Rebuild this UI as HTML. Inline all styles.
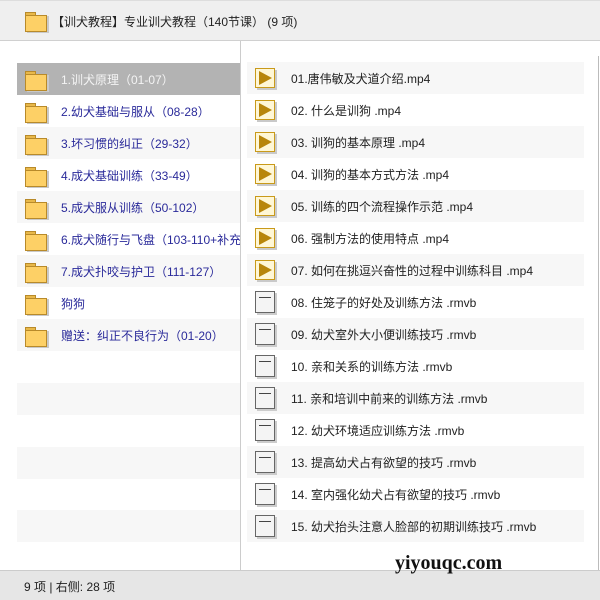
<!DOCTYPE html><html><head><meta charset="utf-8"><style>
*{margin:0;padding:0;box-sizing:border-box}
body{width:600px;height:600px;overflow:hidden;background:#fff;font-family:"Liberation Sans","Noto Sans CJK SC",sans-serif;font-size:12px;color:#222;position:relative}
.hdr{position:absolute;left:0;top:0;width:600px;height:41px;background:#efefef;border-bottom:1px solid #d0d0d0;border-top:1px solid #ddd}
.hdr span{position:absolute;left:52px;top:12px;font-size:12px;color:#222}
.fold{position:absolute;width:20px;height:18px}
.fold:before{content:"";position:absolute;left:0;top:0;width:9px;height:4px;background:#e8b84a;border:1px solid #b88a2a;border-bottom:none}
.fold:after{content:"";position:absolute;left:0;top:3px;width:20px;height:15px;background:#fdd066;border:1px solid #b88a2a;box-shadow:2px 1px 0 #c9c9c9}
.div{position:absolute;left:240px;top:41px;width:1px;height:529px;background:#ccc}
.row{position:absolute;height:32px}
.l{left:17px;width:223px}
.r{left:247px;width:337px}
.g{background:#f7f7f7}
.sel{background:#b3b3b3}
.t{position:absolute;top:8px;white-space:nowrap;font-size:12px}
.l .t{left:44px;color:#2a2a9a}
.sel .t{color:#f4f4f4}
.l .fold{left:8px;top:8px}
.r .t{left:44px;color:#222}
.vid{position:absolute;left:8px;top:6px;width:20px;height:20px;background:#fff7d6;border:1px solid #c99a1a;box-shadow:2px 2px 0 #c9c9c9}
.vid:after{content:"";position:absolute;left:3px;top:2px;border-left:13px solid #b8860b;border-top:7px solid transparent;border-bottom:7px solid transparent}
.doc{position:absolute;left:8px;top:5px;width:20px;height:22px;background:#f4f4f4;border:1px solid #666;box-shadow:2px 2px 0 #ccc}
.doc:after{content:"";position:absolute;left:3px;top:5px;width:12px;height:1px;background:#444}
.ftr{position:absolute;left:0;top:570px;width:600px;height:30px;background:#e6e6e6;border-top:1px solid #ccc}
.ftr span{position:absolute;left:24px;top:7px;font-size:12px;color:#222}
.wm{position:absolute;left:395px;top:552px;font-family:"Liberation Serif",serif;font-weight:bold;font-size:20px;color:#111}
.sb{position:absolute;left:598px;top:56px;width:1px;height:515px;background:#bbb}
</style></head><body>
<div class="hdr"><div class="fold" style="left:25px;top:11px"></div><span>【训犬教程】专业训犬教程（140节课） (9 项)</span></div>
<div class="div"></div><div class="sb"></div>
<div class="row l sel" style="top:63px"><div class="fold"></div><span class="t">1.训犬原理（01-07）</span></div>
<div class="row l" style="top:95px"><div class="fold"></div><span class="t">2.幼犬基础与服从（08-28）</span></div>
<div class="row l g" style="top:127px"><div class="fold"></div><span class="t">3.坏习惯的纠正（29-32）</span></div>
<div class="row l" style="top:159px"><div class="fold"></div><span class="t">4.成犬基础训练（33-49）</span></div>
<div class="row l g" style="top:191px"><div class="fold"></div><span class="t">5.成犬服从训练（50-102）</span></div>
<div class="row l" style="top:223px;overflow:hidden"><div class="fold"></div><span class="t">6.成犬随行与飞盘（103-110+补充1-6）</span></div>
<div class="row l g" style="top:255px"><div class="fold"></div><span class="t">7.成犬扑咬与护卫（111-127）</span></div>
<div class="row l" style="top:287px"><div class="fold"></div><span class="t">狗狗</span></div>
<div class="row l g" style="top:319px"><div class="fold"></div><span class="t">赠送：纠正不良行为（01-20）</span></div>
<div class="row l g" style="top:383px"></div>
<div class="row l g" style="top:447px"></div>
<div class="row l g" style="top:510px"></div>
<div class="row r g" style="top:62px"><div class="vid"></div><span class="t">01.唐伟敏及犬道介绍.mp4</span></div>
<div class="row r" style="top:94px"><div class="vid"></div><span class="t">02. 什么是训狗 .mp4</span></div>
<div class="row r g" style="top:126px"><div class="vid"></div><span class="t">03. 训狗的基本原理 .mp4</span></div>
<div class="row r" style="top:158px"><div class="vid"></div><span class="t">04. 训狗的基本方式方法 .mp4</span></div>
<div class="row r g" style="top:190px"><div class="vid"></div><span class="t">05. 训练的四个流程操作示范 .mp4</span></div>
<div class="row r" style="top:222px"><div class="vid"></div><span class="t">06. 强制方法的使用特点 .mp4</span></div>
<div class="row r g" style="top:254px"><div class="vid"></div><span class="t">07. 如何在挑逗兴奋性的过程中训练科目 .mp4</span></div>
<div class="row r" style="top:286px"><div class="doc"></div><span class="t">08. 住笼子的好处及训练方法 .rmvb</span></div>
<div class="row r g" style="top:318px"><div class="doc"></div><span class="t">09. 幼犬室外大小便训练技巧 .rmvb</span></div>
<div class="row r" style="top:350px"><div class="doc"></div><span class="t">10. 亲和关系的训练方法 .rmvb</span></div>
<div class="row r g" style="top:382px"><div class="doc"></div><span class="t">11. 亲和培训中前来的训练方法 .rmvb</span></div>
<div class="row r" style="top:414px"><div class="doc"></div><span class="t">12. 幼犬环境适应训练方法 .rmvb</span></div>
<div class="row r g" style="top:446px"><div class="doc"></div><span class="t">13. 提高幼犬占有欲望的技巧 .rmvb</span></div>
<div class="row r" style="top:478px"><div class="doc"></div><span class="t">14. 室内强化幼犬占有欲望的技巧 .rmvb</span></div>
<div class="row r g" style="top:510px"><div class="doc"></div><span class="t">15. 幼犬抬头注意人脸部的初期训练技巧 .rmvb</span></div>
<div class="ftr"><span>9 项 | 右侧: 28 项</span></div>
<div class="wm">yiyouqc.com</div>
</body></html>
